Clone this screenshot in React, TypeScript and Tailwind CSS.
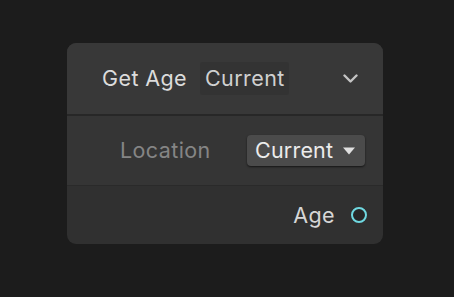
export default function App() {
  return (
    <div
      className="w-[454px] h-[297px] bg-[#1c1c1c] flex items-start justify-start pt-[43px] pl-[67px]"
      style={{ fontFamily: 'Inter, "Noto Sans", sans-serif' }}
    >
      <div className="w-[316px] rounded-[9px] overflow-hidden bg-[#303030]">
        {/* Header */}
        <div className="h-[73px] bg-[#383838] flex items-center pl-[35px] pr-[25px] border-b-2 border-[#272727]">
          <span className="text-[21.5px] text-[#dcdcdc] tracking-[0.4px]">Get Age</span>
          <span className="ml-[13px] h-[33px] pl-[5px] pr-[4px] flex items-center rounded-[3px] bg-[#333333] text-[21.5px] text-[#d0d0d0] tracking-[0.4px]">
            Current
          </span>
          <svg className="ml-auto" width="15" height="10" viewBox="0 0 15 10">
            <path d="M1.5 1.5 L7.5 7.5 L13.5 1.5" fill="none" stroke="#c4c4c4" strokeWidth="2.4" strokeLinecap="round" strokeLinejoin="round" />
          </svg>
        </div>

        {/* Input */}
        <div className="h-[70px] bg-[#353535] flex items-center pl-[53px] pr-[18px] border-b border-[#2a2a2a]">
          <span className="text-[21.5px] text-[#858585] tracking-[0.4px]">Location</span>
          <button className="ml-auto h-[31px] w-[118px] pl-[8px] pr-[9px] flex items-center justify-between rounded-[4px] bg-[#4b4b4b] shadow-[0_1px_2px_rgba(0,0,0,0.6)] text-[21.5px] text-[#ececec] tracking-[0.2px]">
            Current
            <svg width="14" height="8" viewBox="0 0 14 8">
              <path d="M1 0.5 H13 L7 7.5 Z" fill="#e0e0e0" />
            </svg>
          </button>
        </div>

        {/* Output */}
        <div className="h-[58px] flex items-center justify-end pr-[16px]">
          <span className="text-[21.5px] text-[#d6d6d6] tracking-[0.4px]">Age</span>
          <span className="ml-[16px] w-[16px] h-[16px] rounded-full border-2 border-[#6fd8e0] bg-[#262626]" />
        </div>
      </div>
    </div>
  );
}
